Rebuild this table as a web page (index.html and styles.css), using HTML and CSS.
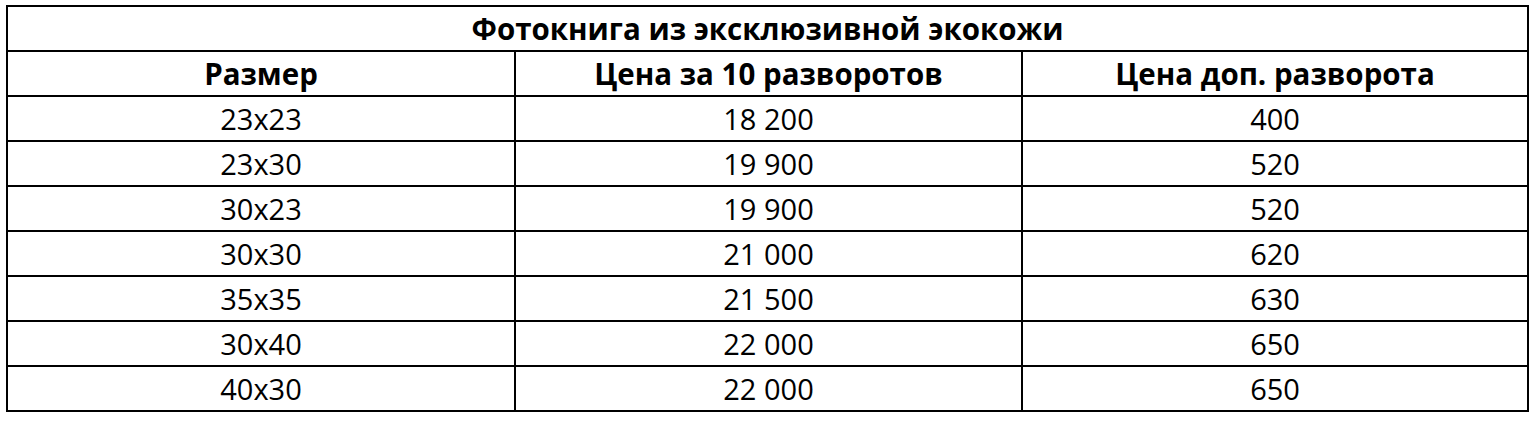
FILE: index.html
```html
<!DOCTYPE html>
<html lang="ru">
<head>
<meta charset="utf-8">
<title>Фотокнига из эксклюзивной экокожи</title>
<link rel="stylesheet" href="styles.css">
</head>
<body>
<table class="price">
  <colgroup><col class="c1"><col class="c2"><col class="c3"></colgroup>
  <thead>
    <tr><th colspan="3" class="title">Фотокнига из эксклюзивной экокожи</th></tr>
    <tr><th>Размер</th><th>Цена за 10 разворотов</th><th>Цена доп. разворота</th></tr>
  </thead>
  <tbody>
    <tr><td>23x23</td><td>18 200</td><td>400</td></tr>
    <tr><td>23x30</td><td>19 900</td><td>520</td></tr>
    <tr><td>30x23</td><td>19 900</td><td>520</td></tr>
    <tr><td>30x30</td><td>21 000</td><td>620</td></tr>
    <tr><td>35x35</td><td>21 500</td><td>630</td></tr>
    <tr><td>30x40</td><td>22 000</td><td>650</td></tr>
    <tr><td>40x30</td><td>22 000</td><td>650</td></tr>
  </tbody>
</table>
</body>
</html>
```
FILE: styles.css
```css
html, body {
  margin: 0;
  background: #fff;
}
body {
  padding: 5px 0 0 6px;
  font-family: "Open Sans", "Noto Sans", sans-serif;
  color: #000;
}
.price {
  border-collapse: collapse;
  table-layout: fixed;
  width: 1521px;
}
.c1 { width: 508px; }
.c2 { width: 507px; }
.c3 { width: 506px; }
.price th,
.price td {
  border: 2px solid #000;
  height: 43px;
  padding: 0;
  line-height: 43px;
  text-align: center;
  font-size: 29px;
  white-space: nowrap;
}
.price th {
  font-weight: 700;
  font-size: 29.5px;
}
```
